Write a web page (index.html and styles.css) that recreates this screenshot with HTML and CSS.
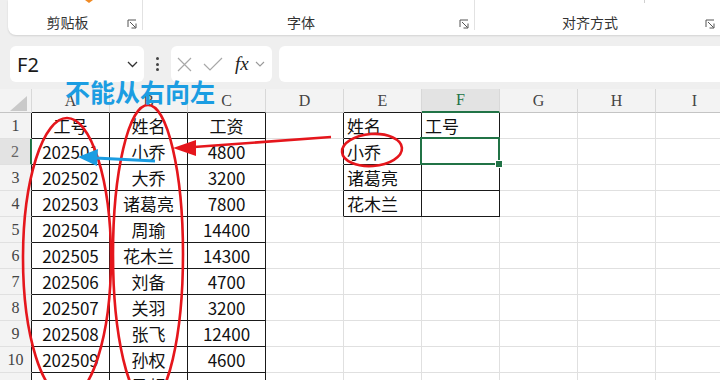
FILE: index.html
```html
<!DOCTYPE html>
<html lang="zh-CN">
<head>
    <meta charset="UTF-8">
    <title>查找 - 不能从右向左</title>
    <link rel="stylesheet" href="styles.css">
</head>
<body>
    <div class="ribbon">
        <div class="panel">
            <div class="group g-clip">
                <div class="gtop">
                    <svg class="paste" width="8" height="3" viewBox="0 0 8 3"><path d="M0 0 L4 3 L8 0" fill="#f08a24"/></svg>
                </div>
                <div class="gfoot">
                    <span class="glabel">剪贴板</span>
                    <svg class="launch" viewBox="0 0 10 10"><path d="M1 8V1h8M3 3l5.5 5.5M4.5 9H9V4.5" fill="none" stroke="#555" stroke-width="1"/></svg>
                </div>
            </div>
            <div class="group g-font">
                <div class="gtop"></div>
                <div class="gfoot">
                    <span class="glabel">字体</span>
                    <svg class="launch" viewBox="0 0 10 10"><path d="M1 8V1h8M3 3l5.5 5.5M4.5 9H9V4.5" fill="none" stroke="#555" stroke-width="1"/></svg>
                </div>
            </div>
            <div class="group g-align">
                <div class="gtop"><span class="tick"></span></div>
                <div class="gfoot">
                    <span class="glabel">对齐方式</span>
                    <svg class="launch" viewBox="0 0 10 10"><path d="M1 8V1h8M3 3l5.5 5.5M4.5 9H9V4.5" fill="none" stroke="#555" stroke-width="1"/></svg>
                </div>
            </div>
        </div>
    </div>

    <div class="fbar">
        <div class="namebox">
            <span>F2</span>
            <svg width="11" height="7" viewBox="0 0 11 7"><path d="M1 1l4.5 4.5L10 1" fill="none" stroke="#333" stroke-width="1.3"/></svg>
        </div>
        <div class="dots"><i></i><i></i><i></i></div>
        <div class="fbtns">
            <svg class="ic-x" width="15" height="15" viewBox="0 0 15 15"><path d="M1 1l13 13M14 1L1 14" stroke="#a8a8a8" stroke-width="1.2"/></svg>
            <svg class="ic-ok" width="20" height="14" viewBox="0 0 20 14"><path d="M1 7l6 6L19 1" fill="none" stroke="#a8a8a8" stroke-width="1.2"/></svg>
            <span class="fx">fx</span>
            <svg class="ic-dd" width="10" height="6" viewBox="0 0 10 6"><path d="M1 1l4 4 4-4" fill="none" stroke="#999" stroke-width="1.1"/></svg>
        </div>
        <div class="finput"></div>
    </div>

    <table class="sheet">
        <colgroup>
            <col class="c-rh">
            <col class="c-w"><col class="c-w"><col class="c-w"><col class="c-w"><col class="c-w">
            <col class="c-w"><col class="c-w"><col class="c-w"><col class="c-w">
        </colgroup>
        <thead>
            <tr>
                <th class="corner"><span></span></th>
                <th class="kb">A</th><th class="kb">B</th><th class="kb">C</th><th>D</th>
                <th class="kb">E</th><th class="hsel">F</th><th>G</th><th>H</th><th>I</th>
            </tr>
        </thead>
        <tbody>
            <tr><th class="rh">1</th><td class="k">工号</td><td class="k">姓名</td><td class="k">工资</td><td class="kr"></td><td class="k l">姓名</td><td class="k l">工号</td><td></td><td></td><td></td></tr>
            <tr><th class="rh rsel">2</th><td class="k">202501</td><td class="k">小乔</td><td class="k">4800</td><td class="kr"></td><td class="k l">小乔</td><td class="k sel"></td><td></td><td></td><td></td></tr>
            <tr><th class="rh">3</th><td class="k">202502</td><td class="k">大乔</td><td class="k">3200</td><td class="kr"></td><td class="k l">诸葛亮</td><td class="k"></td><td></td><td></td><td></td></tr>
            <tr><th class="rh">4</th><td class="k">202503</td><td class="k">诸葛亮</td><td class="k">7800</td><td class="kr"></td><td class="k l">花木兰</td><td class="k"></td><td></td><td></td><td></td></tr>
            <tr><th class="rh">5</th><td class="k">202504</td><td class="k">周瑜</td><td class="k">14400</td><td></td><td></td><td></td><td></td><td></td><td></td></tr>
            <tr><th class="rh">6</th><td class="k">202505</td><td class="k">花木兰</td><td class="k">14300</td><td></td><td></td><td></td><td></td><td></td><td></td></tr>
            <tr><th class="rh">7</th><td class="k">202506</td><td class="k">刘备</td><td class="k">4700</td><td></td><td></td><td></td><td></td><td></td><td></td></tr>
            <tr><th class="rh">8</th><td class="k">202507</td><td class="k">关羽</td><td class="k">3200</td><td></td><td></td><td></td><td></td><td></td><td></td></tr>
            <tr><th class="rh">9</th><td class="k">202508</td><td class="k">张飞</td><td class="k">12400</td><td></td><td></td><td></td><td></td><td></td><td></td></tr>
            <tr><th class="rh">10</th><td class="k">202509</td><td class="k">孙权</td><td class="k">4600</td><td></td><td></td><td></td><td></td><td></td><td></td></tr>
            <tr><th class="rh">11</th><td class="k">202510</td><td class="k">马超</td><td class="k">5200</td><td></td><td></td><td></td><td></td><td></td><td></td></tr>
        </tbody>
    </table>

    <!-- hand drawn marks on top of the sheet -->
    <svg class="marks" width="720" height="380" viewBox="0 0 720 380">
        <g fill="none" stroke="#e5161c" stroke-width="2.6">
            <ellipse cx="67" cy="258" rx="44" ry="140"/>
            <ellipse cx="148" cy="254" rx="35" ry="149"/>
            <ellipse cx="372" cy="150" rx="30" ry="16" transform="rotate(-4 372 150)"/>
            <path d="M331 137 L194 147"/>
        </g>
        <polygon points="173,148 196,140 196,156" fill="#e5161c"/>
        <path d="M155 161 L95 158" stroke="#1b9de2" stroke-width="3" fill="none"/>
        <polygon points="78,157 98,149 97,166" fill="#1b9de2"/>
    </svg>
    <div class="note">不能从右向左</div>
</body>
</html>
```

FILE: styles.css
```css
* {
    box-sizing: border-box;
}

body {
    margin: 0;
    width: 720px;
    height: 380px;
    overflow: hidden;
    position: relative;
    background-color: #efefef;
    font-family: "Noto Sans CJK SC", "Noto Sans", sans-serif;
}

/* ribbon */
.ribbon {
    height: 35px;
    padding-left: 8px;
}

.panel {
    display: flex;
    width: 724px;
    height: 35px;
    padding-bottom: 5px;
    background-color: #fff;
    border-radius: 0 0 8px 8px;
    box-shadow: 0 1px 2px rgba(0, 0, 0, 0.12);
}

.group {
    display: flex;
    flex-direction: column;
    justify-content: space-between;
    height: 30px;
    border-right: 1px solid #e2e2e2;
}

.g-clip {
    width: 135px;
}

.g-font {
    width: 332px;
}

.g-align {
    width: 245px;
    border-right: none;
}

.gtop {
    height: 3px;
    display: flex;
}

.paste {
    display: block;
    margin-left: 77px;
}

.tick {
    width: 1px;
    height: 3px;
    margin-left: 169px;
    background-color: #d0d0d0;
}

.gfoot {
    display: flex;
    align-items: flex-end;
    height: 16px;
}

.glabel {
    flex: 1;
    text-align: center;
    font-size: 14px;
    line-height: 16px;
    color: #333;
}

.launch {
    width: 10px;
    height: 10px;
    margin: 0 5px 1px 0;
}

/* formula bar */
.fbar {
    display: flex;
    height: 54px;
    padding: 11px 0 7px 10px;
}

.namebox {
    display: flex;
    align-items: center;
    justify-content: space-between;
    width: 134px;
    height: 36px;
    padding: 0 6px 0 7px;
    background-color: #fff;
    border-radius: 6px;
}

.namebox span {
    font-family: "Noto Sans", sans-serif;
    font-size: 20px;
    color: #1a1a1a;
}

.dots {
    display: flex;
    flex-direction: column;
    align-items: center;
    justify-content: center;
    gap: 2.5px;
    width: 27px;
}

.dots i {
    width: 3px;
    height: 3px;
    border-radius: 50%;
    background-color: #444;
}

.fbtns {
    display: flex;
    align-items: center;
    width: 101px;
    padding-left: 6px;
    background-color: #fff;
    border-radius: 6px;
}

.ic-ok {
    margin-left: 11px;
}

.fx {
    margin-left: 12px;
    font-family: "Liberation Serif", serif;
    font-style: italic;
    font-size: 19px;
    color: #222;
}

.ic-dd {
    margin-left: 6px;
}

.finput {
    flex: 1;
    margin-left: 7px;
    background-color: #fff;
    border-radius: 6px 0 0 6px;
}

/* sheet */
.sheet {
    border-collapse: separate;
    border-spacing: 0;
    table-layout: fixed;
    width: 734px;
    background-color: #fff;
    font-size: 17px;
    color: #111;
}

.c-rh {
    width: 32px;
}

.c-w {
    width: 78px;
}

.sheet th,
.sheet td {
    padding: 0;
    border-right: 1px solid #e0e0e0;
    border-bottom: 1px solid #e0e0e0;
}

.sheet thead tr {
    height: 24px;
}

.sheet tbody tr {
    height: 26px;
}

.sheet thead th {
    background-color: #f3f3f3;
    border-right-color: #d8d8d8;
    border-bottom-color: #c4c4c4;
    font-family: "Liberation Serif", serif;
    font-size: 16px;
    font-weight: normal;
    color: #444;
}

.corner {
    vertical-align: bottom;
}

.corner span {
    display: block;
    width: 17px;
    height: 15px;
    margin: 0 4px 1px auto;
    background-color: #c9c9c9;
    clip-path: polygon(100% 0, 100% 100%, 0 100%);
}

.sheet th.hsel {
    background-color: #e3e3e3;
    color: #217346;
    border-bottom: 2px solid #217346;
}

.rh {
    background-color: #f3f3f3;
    font-family: "Liberation Serif", serif;
    font-size: 16px;
    font-weight: normal;
    color: #444;
    text-align: center;
    border-right-color: #1a1a1a !important;
}

.rsel {
    background-color: #e3e3e3;
    color: #666;
    border-right: 2px solid #217346 !important;
}

.sheet td {
    text-align: center;
}

.sheet .l {
    text-align: left;
    padding-left: 3px;
}

.sheet .k {
    border-right-color: #1a1a1a;
    border-bottom-color: #1a1a1a;
}

.sheet .kr {
    border-right-color: #1a1a1a;
}

.sheet thead th.kb {
    border-bottom-color: #1a1a1a;
}

.sel {
    position: relative;
}

.sel::after {
    content: "";
    position: absolute;
    left: -2px;
    top: -2px;
    right: -1px;
    bottom: -1px;
    border: 2px solid #217346;
}

.sel::before {
    content: "";
    position: absolute;
    right: -4px;
    bottom: -4px;
    width: 6px;
    height: 6px;
    background-color: #217346;
    border: 1px solid #fff;
    z-index: 1;
}

/* annotations */
.marks {
    position: absolute;
    left: 0;
    top: 0;
    pointer-events: none;
}

.note {
    position: absolute;
    left: 65px;
    top: 79px;
    font-size: 25px;
    line-height: 25px;
    font-weight: 700;
    color: #1b9de2;
}
```
